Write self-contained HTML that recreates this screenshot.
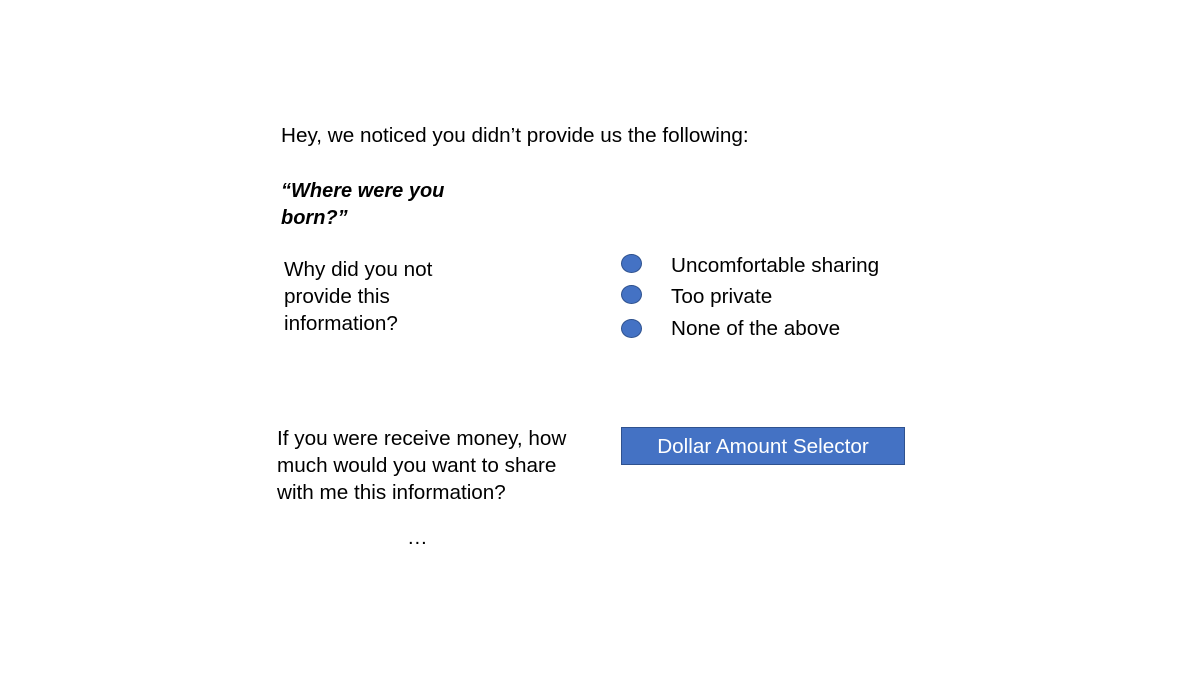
<!DOCTYPE html>
<html><head><style>
body{margin:0;width:1200px;height:675px;background:#fff;position:relative;overflow:hidden;font-family:"Liberation Sans",sans-serif;font-size:20.7px;color:#000}
.t{position:absolute;line-height:27px;white-space:nowrap}
.c{position:absolute;width:19px;height:17px;border-radius:50%;background:#4472c4;border:1px solid #2f528f}
.btn{position:absolute;left:621px;top:427px;width:282px;height:36px;background:#4472c4;border:1px solid #2f528f;color:#fff;text-align:center;line-height:38px;font-size:20.7px}
</style></head><body>
<div class="t" style="left:281px;top:122px">Hey, we noticed you didn’t provide us the following:</div>
<div class="t" style="left:281px;top:178px;font-weight:bold;font-style:italic;font-size:20px">“Where were you<br>born?”</div>
<div class="t" style="left:284px;top:256px">Why did you not<br>provide this<br>information?</div>
<div class="c" style="left:621px;top:254px"></div>
<div class="c" style="left:621px;top:285px"></div>
<div class="c" style="left:621px;top:319px"></div>
<div class="t" style="left:671px;top:252px">Uncomfortable sharing</div>
<div class="t" style="left:671px;top:283px">Too private</div>
<div class="t" style="left:671px;top:315px">None of the above</div>
<div class="t" style="left:277px;top:425px">If you were receive money, how<br>much would you want to share<br>with me this information?</div>
<div class="t" style="left:407px;top:524px">…</div>
<div class="btn">Dollar Amount Selector</div>
</body></html>
